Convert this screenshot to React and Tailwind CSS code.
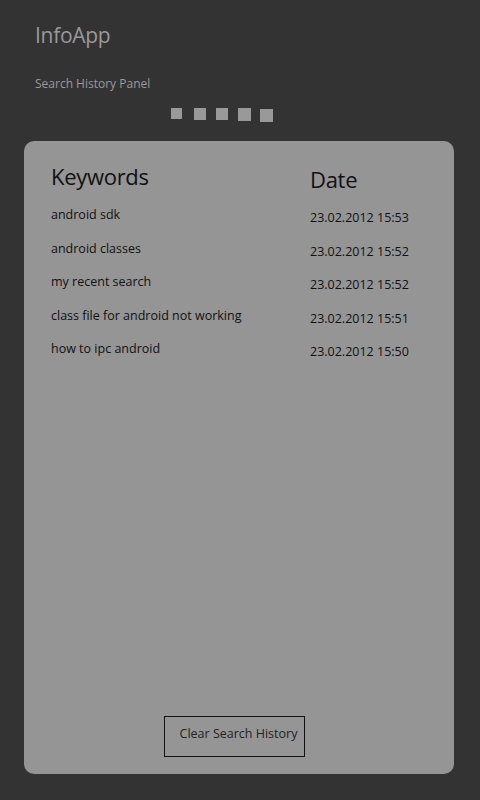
import React from "react";

const rows = [
  { keyword: "android sdk", date: "23.02.2012 15:53" },
  { keyword: "android classes", date: "23.02.2012 15:52" },
  { keyword: "my recent search", date: "23.02.2012 15:52" },
  { keyword: "class file for android not working", date: "23.02.2012 15:51" },
  { keyword: "how to ipc android", date: "23.02.2012 15:50" },
];

const App = () => {
  return (
    <div
      className="w-[480px] h-[800px] bg-[#333333] flex flex-col overflow-hidden"
      style={{ fontFamily: '"Open Sans", "Noto Sans", sans-serif' }}
    >
      {/* Header */}
      <div className="pl-[35px] pt-[20px]">
        <h1 className="text-[21px] leading-[30px] text-[#999999] tracking-[-0.3px]">InfoApp</h1>
        <p className="mt-[26px] text-[12px] leading-[16px] text-[#9a9a9a]">
          Search History Panel
        </p>
      </div>

      {/* Page dots */}
      <div className="flex items-start pl-[171px] mt-[16px] h-[33px]">
        <div className="w-[11px] h-[11px] bg-[#999999]" />
        <div className="w-[12px] h-[12px] bg-[#999999] ml-[12px]" />
        <div className="w-[12px] h-[12px] bg-[#999999] ml-[10px]" />
        <div className="w-[13px] h-[13px] bg-[#999999] ml-[10px]" />
        <div className="w-[13px] h-[13px] bg-[#999999] ml-[9px] mt-[1px]" />
      </div>

      {/* Panel */}
      <div className="mx-[24px] w-[430px] h-[633px] rounded-[10px] bg-[#959595] flex flex-col pl-[27px] pt-[19px] pb-[17px]">
        <div className="grid grid-cols-[259px_1fr] items-end">
          <div className="text-[22px] leading-[32px] text-[#111111] tracking-[-0.3px]">Keywords</div>
          <div className="text-[22px] leading-[32px] text-[#111111] translate-y-[3px] tracking-[-0.3px]">Date</div>
        </div>
        <div className="mt-[15px] flex flex-col">
          {rows.map((r) => (
            <div key={r.date + r.keyword} className="grid grid-cols-[259px_1fr] h-[33.5px]">
              <div className="text-[12.5px] leading-[16px] text-[#111111]">{r.keyword}</div>
              <div className="text-[12.5px] leading-[16px] text-[#111111] translate-y-[3px]">{r.date}</div>
            </div>
          ))}
        </div>

        <div className="mt-auto flex pl-[113px]">
          <button
            type="button"
            className="w-[141px] h-[41px] border border-[#111111] text-[12.5px] text-[#222222] pl-[8px] pb-[4px]"
          >
            Clear Search History
          </button>
        </div>
      </div>
    </div>
  );
};

export default App;
